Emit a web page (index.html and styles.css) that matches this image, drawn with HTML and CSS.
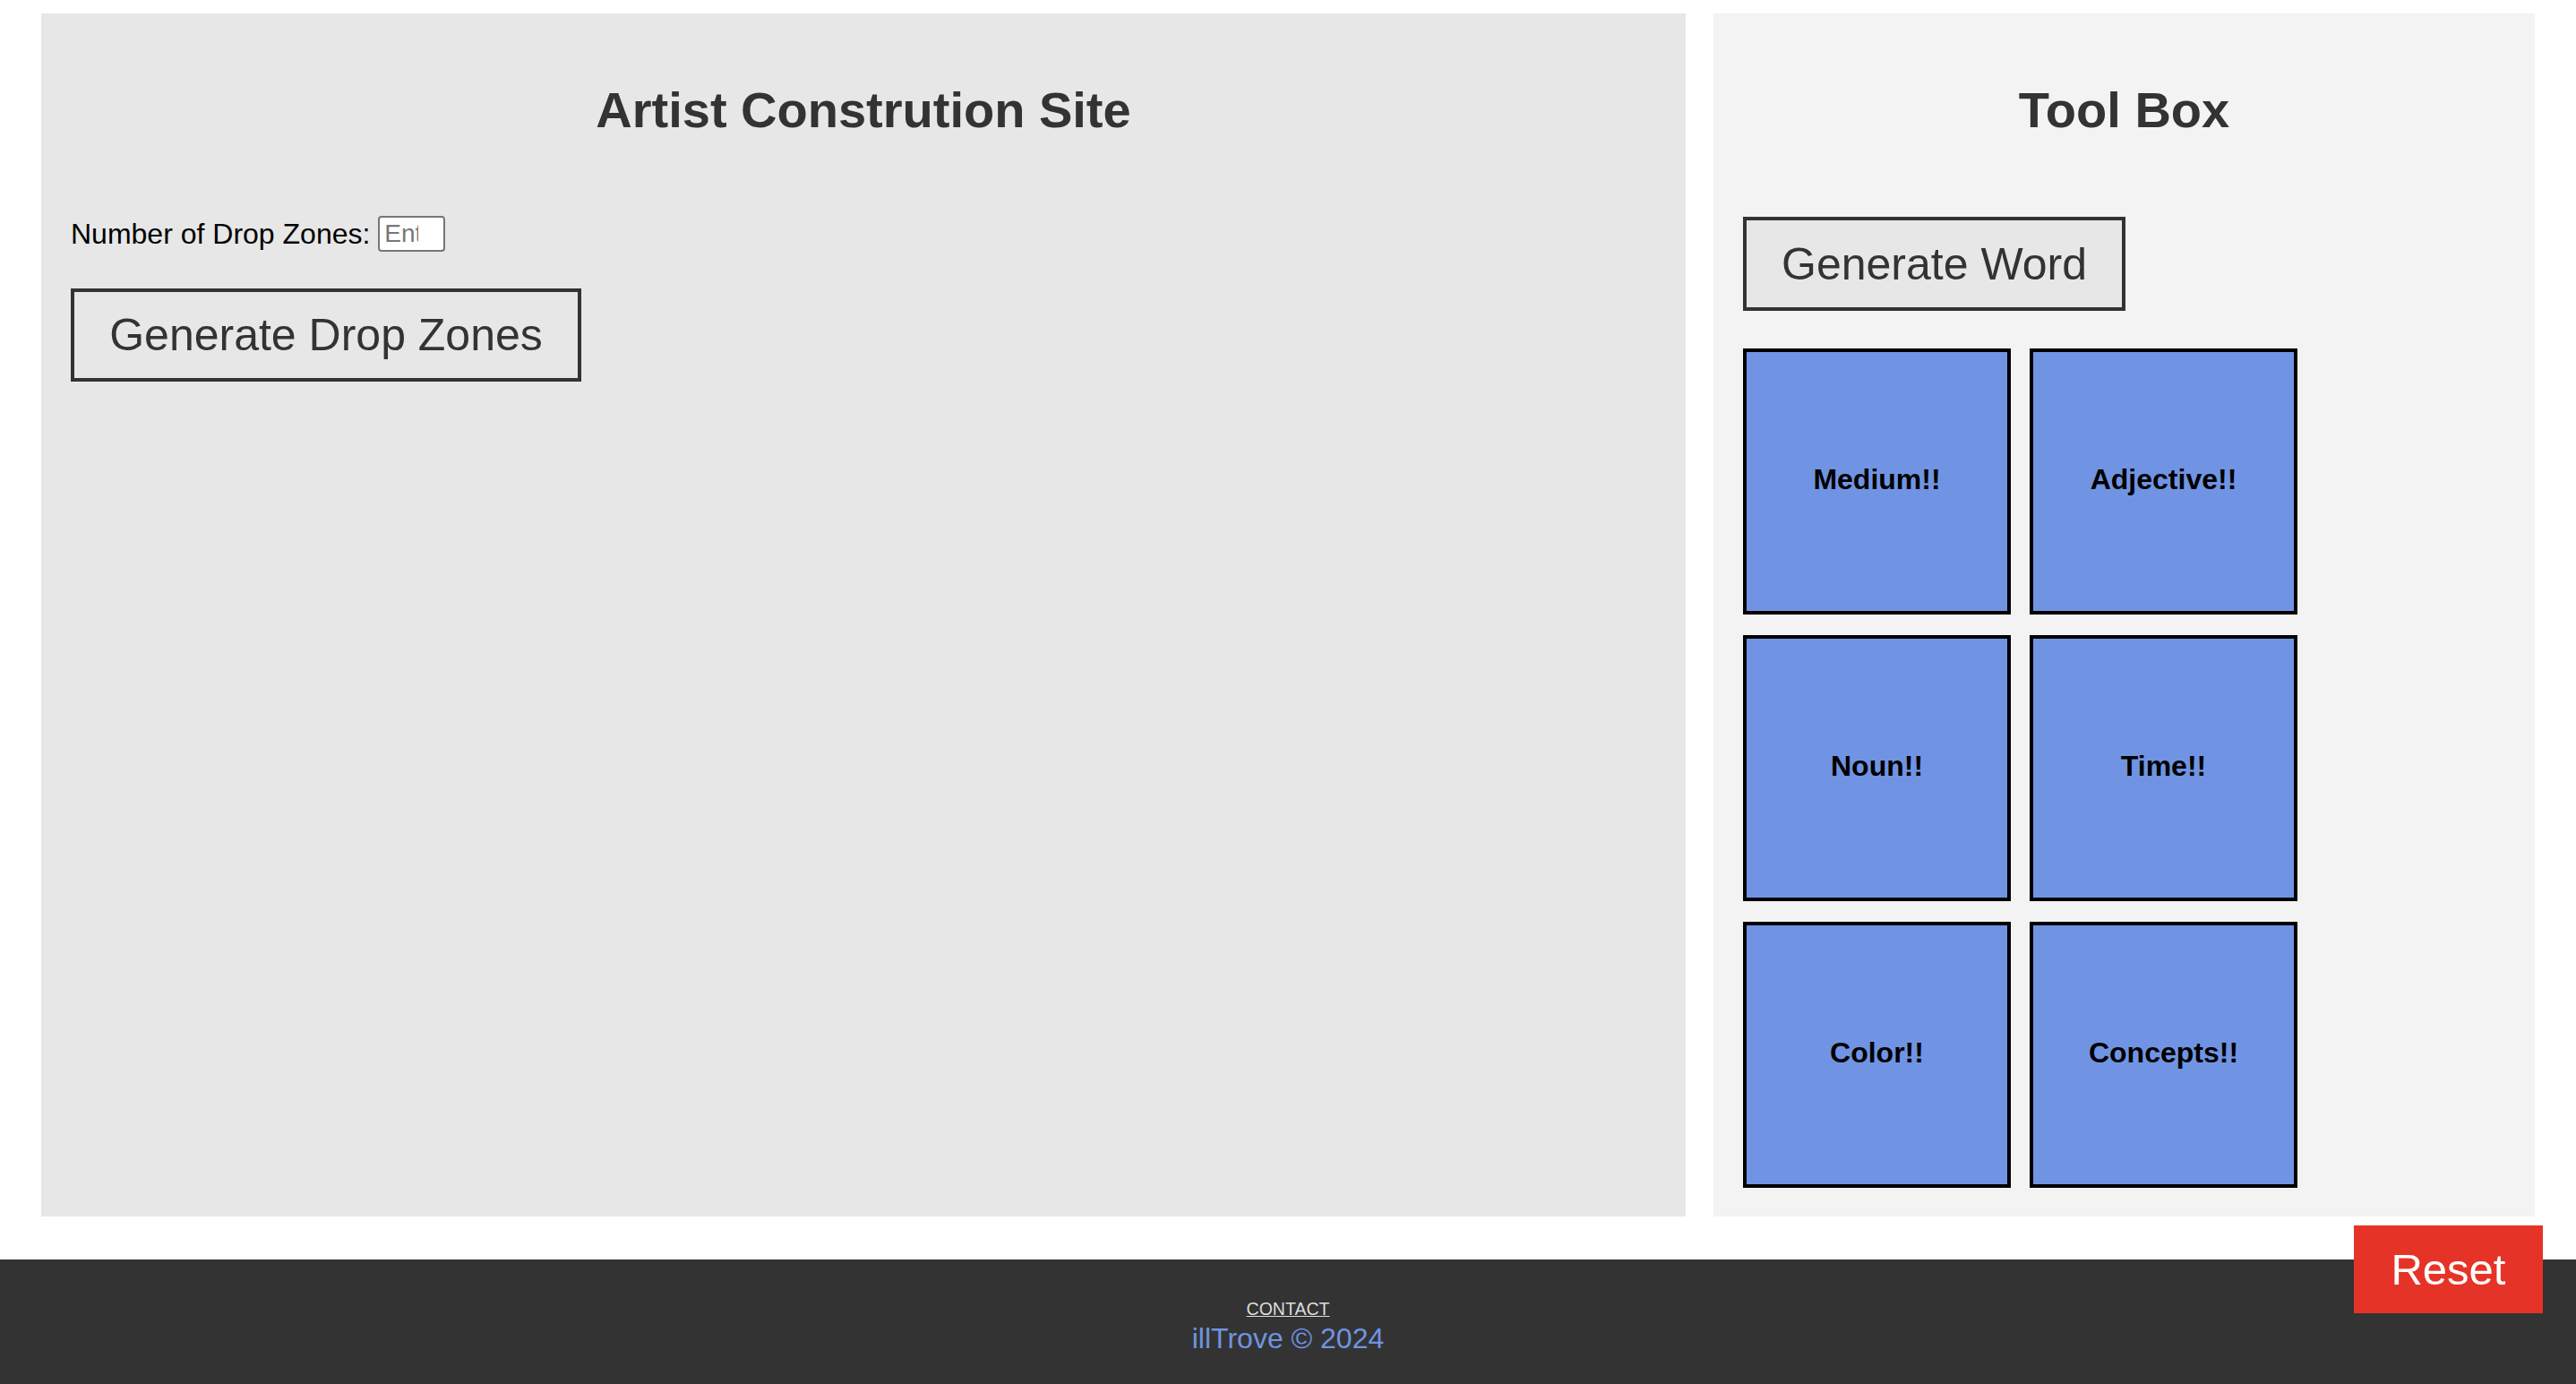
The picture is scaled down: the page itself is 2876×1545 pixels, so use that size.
FILE: index.html
```html
<!DOCTYPE html>
<html lang="en">
<head>
<meta charset="utf-8">
<title>illTrove – Artist Construction Site</title>
<link rel="stylesheet" href="styles.css">
</head>
<body>
<main class="workspace">
  <section class="site">
    <h1 class="panel-title">Artist Constrution Site</h1>
    <div class="zone-row">
      <label class="zone-label" for="zones">Number of Drop Zones:</label>
      <input class="zone-input" id="zones" type="text" placeholder="Enter number">
    </div>
    <button class="outline-btn site-btn">Generate Drop Zones</button>
  </section>
  <aside class="toolbox">
    <h1 class="panel-title">Tool Box</h1>
    <button class="outline-btn word-btn">Generate Word</button>
    <div class="tiles">
      <div class="tile">Medium!!</div>
      <div class="tile">Adjective!!</div>
      <div class="tile">Noun!!</div>
      <div class="tile">Time!!</div>
      <div class="tile">Color!!</div>
      <div class="tile">Concepts!!</div>
    </div>
  </aside>
</main>
<button class="reset-btn">Reset</button>
<footer class="footer">
  <a class="contact" href="#">CONTACT</a>
  <p class="copyright">illTrove © 2024</p>
</footer>
</body>
</html>
```
FILE: styles.css
```css
html, body {
  margin: 0;
  padding: 0;
  background: #ffffff;
}

body {
  font-family: "Liberation Sans", Arial, Helvetica, sans-serif;
  color: #333333;
}

.workspace {
  display: grid;
  grid-template-columns: 1836fr 917fr;
  column-gap: 31px;
  padding: 15px 46px 0;
}

.site,
.toolbox {
  box-sizing: border-box;
  min-width: 0;
  padding: 1px 33px 32px;
}

.site {
  background: #e7e7e7;
}

.toolbox {
  background: #f3f3f3;
}

.panel-title {
  margin: 75px 0 87px;
  font-size: 56px;
  font-weight: bold;
  text-align: center;
  color: #333333;
  line-height: 64px;
}

.zone-row {
  display: flex;
  align-items: center;
  height: 38px;
  margin-bottom: 42px;
}

.zone-label {
  font-size: 32px;
  color: #000000;
  margin-right: 9px;
}

.zone-input {
  box-sizing: border-box;
  width: 75px;
  height: 40px;
  padding: 2px 28px 2px 5px;
  font-family: "Liberation Sans", Arial, sans-serif;
  font-size: 28px;
  border: 2px solid #767676;
  border-radius: 4px;
  background: #ffffff;
}

.zone-input::placeholder {
  color: #777777;
}

.outline-btn {
  display: block;
  box-sizing: border-box;
  height: 105px;
  padding: 0 38px;
  white-space: nowrap;
  font-family: "Liberation Sans", Arial, sans-serif;
  font-size: 50px;
  color: #333333;
  background: #e7e7e7;
  border: 4px solid #333333;
  border-radius: 0;
}

.site-btn {
  width: 570px;
  height: 104px;
}

.word-btn {
  width: 427px;
  margin-bottom: 42px;
}

.tiles {
  display: grid;
  grid-template-columns: repeat(2, 299px);
  grid-auto-rows: 297px;
  gap: 23px 21px;
}

.tile {
  box-sizing: border-box;
  display: flex;
  align-items: center;
  justify-content: center;
  background: #7094e3;
  border: 4px solid #000000;
  font-size: 32px;
  font-weight: bold;
  color: #000000;
  padding-bottom: 4px;
}

.reset-btn {
  position: fixed;
  right: 37px;
  bottom: 79px;
  width: 211px;
  height: 98px;
  padding: 0;
  border: none;
  background: #e53427;
  color: #ffffff;
  font-family: "Liberation Sans", Arial, sans-serif;
  font-size: 49px;
  z-index: 10;
}

.footer {
  margin-top: 48px;
  background: #333333;
  text-align: center;
  padding: 44px 0 32px;
}

.contact {
  display: inline-block;
  color: #dddddd;
  font-size: 19.5px;
  line-height: 22px;
  text-decoration: underline;
}

.copyright {
  margin: 4px 0 0;
  color: #6f94e0;
  font-size: 32px;
  line-height: 37px;
}
```
